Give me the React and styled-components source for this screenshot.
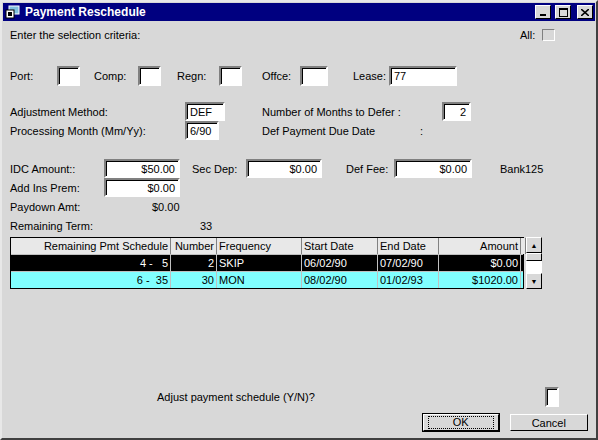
import React from "react";
import styled, { createGlobalStyle } from "styled-components";

const Global = createGlobalStyle`
  body { margin: 0; background: #d8d8d8; font-family: "Liberation Sans", Arial, sans-serif; font-size: 11px; color: #000; }
`;

const Window = styled.div`
  width: 598px;
  height: 440px;
  box-sizing: border-box;
  background: #d8d8d8;
  border: 2px solid;
  border-color: #e8e8e8 #404040 #404040 #e8e8e8;
  display: flex;
  flex-direction: column;
`;

const TitleBar = styled.div`
  height: 18px;
  margin: 1px;
  background: #000080;
  color: #fff;
  display: flex;
  align-items: center;
  padding: 0 2px;
  font-weight: bold;
  font-size: 12px;
  gap: 4px;
`;

const TitleText = styled.span`
  flex: 1;
`;

const TitleBtn = styled.div`
  width: 14px;
  height: 12px;
  background: #d8d8d8;
  border: 1px solid;
  border-color: #fff #000 #000 #fff;
  display: flex;
  align-items: center;
  justify-content: center;
  margin-left: ${(p) => p.gap || 0}px;
`;

const Body = styled.div`
  position: relative;
  flex: 1;
  padding: 0 8px;
`;

const Row = styled.div`
  display: flex;
  align-items: center;
  height: ${(p) => p.h || 19}px;
  margin-top: ${(p) => p.mt || 0}px;
`;

const Label = styled.span`
  width: ${(p) => (p.w ? p.w + "px" : "auto")};
  flex-shrink: 0;
  white-space: nowrap;
`;

const Field = styled.div`
  width: ${(p) => p.w}px;
  height: ${(p) => p.h || 19}px;
  box-sizing: border-box;
  flex-shrink: 0;
  background: #fff;
  border: 2px solid;
  border-color: #808080 #fff #fff #808080;
  box-shadow: inset 1px 1px 0 #000;
  display: flex;
  align-items: center;
  justify-content: ${(p) => (p.right ? "flex-end" : "flex-start")};
  padding: 0 3px;
  margin-right: ${(p) => p.mr || 0}px;
`;

const Check = styled.div`
  width: 11px;
  height: 10px;
  border: 1px solid;
  border-color: #808080 #fff #fff #808080;
  background: #d8d8d8;
`;

const Grid = styled.div`
  display: flex;
  margin-top: 2px;
`;

const Table = styled.div`
  width: 512px;
  border: 1px solid #000;
  background: #fff;
`;

const TRow = styled.div`
  display: grid;
  grid-template-columns: 160px 46px 85px 76px 61px 82px 1fr;
  height: 16px;
  background: ${(p) => p.bg};
  color: ${(p) => p.fg || "#000"};
  border-bottom: ${(p) => (p.last ? "none" : "1px solid #c0c0c0")};
`;

const Cell = styled.div`
  border-right: 1px solid ${(p) => p.line || "#808080"};
  text-align: ${(p) => (p.right ? "right" : "left")};
  padding: 0 2px;
  line-height: 16px;
  white-space: pre;
  overflow: hidden;
`;

const HCell = styled(Cell)`
  background: #e8e8e8;
`;

const Scroll = styled.div`
  width: 16px;
  margin-left: 2px;
  display: flex;
  flex-direction: column;
  background: #fff;
`;

const SBtn = styled.div`
  height: ${(p) => p.h || 14}px;
  background: #d8d8d8;
  border: 1px solid;
  border-color: #fff #000 #000 #fff;
  display: flex;
  align-items: center;
  justify-content: center;
  font-size: 7px;
`;

const ScrollTrack = styled.div`
  flex: 1;
`;

const Bottom = styled.div`
  position: absolute;
  left: 8px;
  right: 8px;
  bottom: 6px;
`;

const Button = styled.div`
  width: ${(p) => p.w}px;
  height: 17px;
  box-sizing: border-box;
  background: #d8d8d8;
  border: 1px solid;
  border-color: #fff #000 #000 #fff;
  outline: ${(p) => (p.def ? "1px solid #000" : "none")};
  display: flex;
  align-items: center;
  justify-content: center;
  margin-left: ${(p) => p.ml || 0}px;
`;

const Focus = styled.span`
  box-sizing: border-box;
  width: 66px;
  text-align: center;
  border: 1px dotted #000;
  line-height: 11px;
`;

const rows = [
  ["4 -   5", "2", "SKIP", "06/02/90", "07/02/90", "$0.00"],
  ["6 -  35", "30", "MON", "08/02/90", "01/02/93", "$1020.00"],
];

export default function App() {
  return (
    <Window>
      <Global />
      <TitleBar>
        <svg width="16" height="14" viewBox="0 0 16 14">
          <rect x="4" y="1" width="10" height="8" fill="#80c0e0" stroke="#fff" />
          <rect x="1" y="5" width="8" height="8" fill="#fff" stroke="#000" />
          <rect x="3" y="7" width="4" height="4" fill="#000" />
        </svg>
        <TitleText>Payment Reschedule</TitleText>
        <TitleBtn>
          <svg width="8" height="8"><rect x="1" y="6" width="6" height="2" fill="#000" /></svg>
        </TitleBtn>
        <TitleBtn>
          <svg width="9" height="9"><rect x="0.5" y="0.5" width="8" height="8" fill="none" stroke="#000" /><rect x="0" y="0" width="9" height="2" fill="#000" /></svg>
        </TitleBtn>
        <TitleBtn gap={2}>
          <svg width="8" height="7"><path d="M0 0L8 7M8 0L0 7" stroke="#000" strokeWidth="1.6" /></svg>
        </TitleBtn>
      </TitleBar>
      <Body>
        <Row mt={3}>
          <Label w={510}>Enter the selection criteria:</Label>
          <Label w={22}>All:</Label>
          <Check />
        </Row>
        <Row mt={22} h={20}>
          <Label w={47}>Port:</Label>
          <Field w={23} h={20} mr={14} />
          <Label w={44}>Comp:</Label>
          <Field w={23} h={20} mr={16} />
          <Label w={42}>Regn:</Label>
          <Field w={23} h={20} mr={20} />
          <Label w={38}>Offce:</Label>
          <Field w={28} h={20} mr={25} />
          <Label w={36}>Lease:</Label>
          <Field w={68} h={20}>77</Field>
        </Row>
        <Row mt={16}>
          <Label w={175}>Adjustment Method:</Label>
          <Field w={40} mr={37}>DEF</Field>
          <Label w={180}>Number of Months to Defer :</Label>
          <Field w={29} right>2</Field>
        </Row>
        <Row>
          <Label w={175}>Processing Month (Mm/Yy):</Label>
          <Field w={34} mr={43}>6/90</Field>
          <Label w={158}>Def Payment Due Date</Label>
          <Label>:</Label>
        </Row>
        <Row mt={19}>
          <Label w={94}>IDC Amount::</Label>
          <Field w={76} right mr={12}>$50.00</Field>
          <Label w={54}>Sec Dep:</Label>
          <Field w={76} right mr={24}>$0.00</Field>
          <Label w={48}>Def Fee:</Label>
          <Field w={78} right mr={28}>$0.00</Field>
          <Label w={25}>Bank</Label>
          <Label>125</Label>
        </Row>
        <Row>
          <Label w={94}>Add Ins Prem:</Label>
          <Field w={76} right>$0.00</Field>
        </Row>
        <Row>
          <Label w={142}>Paydown Amt:</Label>
          <Label>$0.00</Label>
        </Row>
        <Row>
          <Label w={190}>Remaining Term:</Label>
          <Label>33</Label>
        </Row>
        <Grid>
          <Table>
            <TRow bg="#e8e8e8">
              <HCell right>Remaining Pmt Schedule</HCell>
              <HCell right>Number</HCell>
              <HCell>Frequency</HCell>
              <HCell>Start Date</HCell>
              <HCell>End Date</HCell>
              <HCell right>Amount</HCell>
              <HCell />
            </TRow>
            {rows.map((r, i) => (
              <TRow key={i} bg={i === 0 ? "#000" : "#80ffff"} fg={i === 0 ? "#fff" : "#000"} last={i === 1}>
                <Cell right line="#c0c0c0">{r[0]}</Cell>
                <Cell right line="#c0c0c0">{r[1]}</Cell>
                <Cell line="#c0c0c0">{r[2]}</Cell>
                <Cell line="#c0c0c0">{r[3]}</Cell>
                <Cell line="#c0c0c0">{r[4]}</Cell>
                <Cell right line="#c0c0c0">{r[5]}</Cell>
                <Cell line="transparent" />
              </TRow>
            ))}
          </Table>
          <Scroll>
            <SBtn>▲</SBtn>
            <SBtn h={6} />
            <ScrollTrack />
            <SBtn>▼</SBtn>
          </Scroll>
        </Grid>
        <Bottom>
          <Row h={20}>
            <Label w={147} />
            <Label w={388}>Adjust payment schedule (Y/N)?</Label>
            <Field w={14} h={20} />
          </Row>
          <Row h={19} mt={6}>
            <Label w={413} />
            <Button w={76} def>
              <Focus>OK</Focus>
            </Button>
            <Button w={79} ml={11}>Cancel</Button>
          </Row>
        </Bottom>
      </Body>
    </Window>
  );
}
